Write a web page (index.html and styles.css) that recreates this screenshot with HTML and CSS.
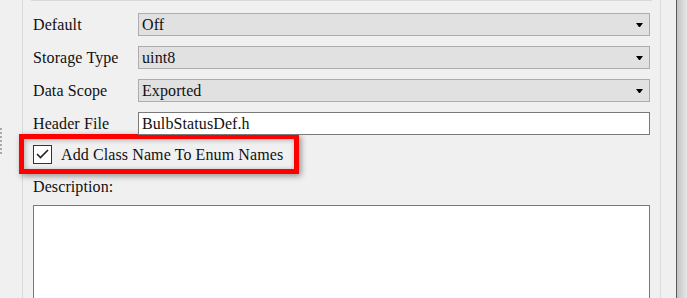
FILE: index.html
```html
<!DOCTYPE html>
<html>
<head>
	<title>Enum Properties</title>
	<link rel="stylesheet" href="styles.css">
</head>
<body>
	<div class="window">
		<div class="dock">
			<div class="grip"></div>
		</div>
		<div class="panel">
			<div class="separator"></div>
			<div class="form">
				<label class="field-label">Default</label>
				<div class="combo">
					<span>Off</span>
					<svg class="arrow" width="7" height="4" viewBox="0 0 7 4"><polygon points="0,0 7,0 4,4 3,4" fill="#000"/></svg>
				</div>
				<label class="field-label">Storage Type</label>
				<div class="combo">
					<span>uint8</span>
					<svg class="arrow" width="7" height="4" viewBox="0 0 7 4"><polygon points="0,0 7,0 4,4 3,4" fill="#000"/></svg>
				</div>
				<label class="field-label">Data Scope</label>
				<div class="combo">
					<span>Exported</span>
					<svg class="arrow" width="7" height="4" viewBox="0 0 7 4"><polygon points="0,0 7,0 4,4 3,4" fill="#000"/></svg>
				</div>
				<label class="field-label">Header File</label>
				<div class="edit">BulbStatusDef.h</div>
			</div>
			<div class="highlight">
				<span class="check">
					<svg width="13" height="10" viewBox="0 0 13 10"><polyline points="1,5 4.5,8.5 12,1" fill="none" stroke="#222" stroke-width="1.6"/></svg>
				</span>
				<span class="check-text">Add Class Name To Enum Names</span>
			</div>
			<div class="desc-label">Description:</div>
			<div class="memo"></div>
		</div>
		<div class="gutter"></div>
		<div class="frame"></div>
	</div>
</body>
</html>
```

FILE: styles.css
```css
html, body {
	margin: 0;
	height: 100%;
	overflow: hidden;
}

body {
	background-color: #f0f0f0;
	font-family: "Liberation Serif", serif;
	font-size: 16px;
	letter-spacing: 0.1px;
	color: #111;
}

.window {
	display: flex;
	height: 298px;
}

.dock {
	width: 22px;
	border-right: 1px solid #dadada;
}

.grip {
	width: 2px;
	height: 28px;
	margin-top: 128px;
	background: repeating-linear-gradient(#a8a8a8 0 2px, transparent 2px 4px);
}

.panel {
	width: 617px;
	padding: 0 10px;
	border-right: 1px solid #dcdcdc;
}

.separator {
	height: 1px;
	margin: 0 -2px 0 -2px;
	background-color: #d9d9d9;
}

.form {
	display: grid;
	grid-template-columns: 105px 1fr;
	grid-auto-rows: 23px;
	row-gap: 10px;
	margin-top: 12px;
	align-items: center;
}

.field-label {
	line-height: 23px;
}

.combo {
	display: flex;
	align-items: center;
	justify-content: space-between;
	height: 21px;
	padding: 0 6px 0 3px;
	background-color: #e1e1e1;
	border: 1px solid #adadad;
}

.edit {
	height: 21px;
	line-height: 21px;
	padding-left: 3px;
	background-color: #fff;
	border: 1px solid #7a7a7a;
}

.highlight {
	display: flex;
	align-items: center;
	gap: 9px;
	width: 261px;
	height: 30px;
	margin: -1px 0 0 -14px;
	padding: 0 0 0 9px;
	border: 5px solid #ff0000;
	box-shadow: 2px 2px 6px rgba(0, 0, 0, 0.4), inset 1px 1px 5px rgba(0, 0, 0, 0.3);
}

.check {
	display: flex;
	align-items: center;
	justify-content: center;
	width: 17px;
	height: 17px;
	background-color: #fff;
	border: 1px solid #333;
}

.check-text {
	line-height: 19px;
}

.desc-label {
	margin-top: 3px;
	line-height: 19px;
}

.memo {
	height: 120px;
	margin-top: 9px;
	background-color: #fff;
	border: 1px solid #7a7a7a;
}

.gutter {
	width: 15px;
}

.frame {
	flex: 1;
	border-left: 1px solid #5a5a5a;
	background: linear-gradient(to right, #c4c4c4, #e6e6e6);
}
```
